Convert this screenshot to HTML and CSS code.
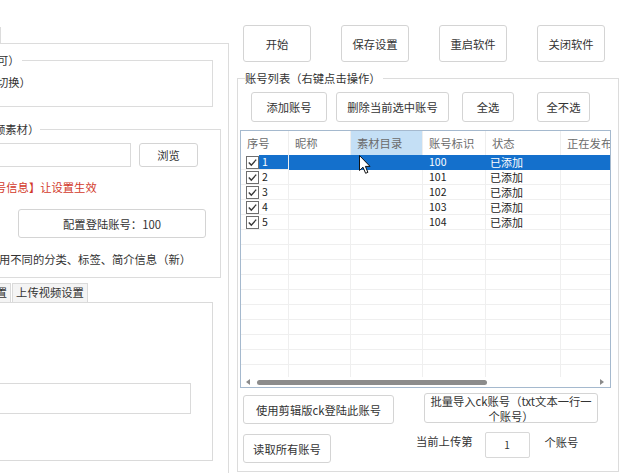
FILE: index.html
```html
<!DOCTYPE html>
<html lang="zh-CN">
<head>
<meta charset="utf-8">
<title>账号设置</title>
<link rel="stylesheet" href="styles.css">
</head>
<body>
<div class="app">
  <div class="left">
    <div class="ltop"><div class="mtab"></div></div>
    <div class="lpage">
      <fieldset class="gb gb1">
        <legend>可）</legend>
        <div class="gb1-text">切换）</div>
      </fieldset>
      <fieldset class="gb gb2">
        <legend>频素材）</legend>
        <div class="pathrow">
          <div class="textbox path"></div>
          <button class="btn browse">浏览</button>
        </div>
        <div class="red">号信息】让设置生效</div>
        <button class="btn cfg">配置登陆账号：100</button>
        <div class="note">用不同的分类、标签、简介信息（新）</div>
      </fieldset>
      <div class="tabs">
        <div class="tab tab-a">置</div>
        <div class="tab tab-b">上传视频设置</div>
      </div>
      <div class="tabpage">
        <div class="textbox wide"></div>
      </div>
    </div>
  </div>

  <div class="right">
    <div class="toprow">
      <button class="btn big">开始</button>
      <button class="btn big">保存设置</button>
      <button class="btn big">重启软件</button>
      <button class="btn big">关闭软件</button>
    </div>
    <fieldset class="gb acct">
      <legend>账号列表（右键点击操作）</legend>
      <div class="actrow">
        <button class="btn act add">添加账号</button>
        <button class="btn act del">删除当前选中账号</button>
        <button class="btn act all">全选</button>
        <button class="btn act none">全不选</button>
      </div>
      <div class="lv">
        <div class="lv-client">
          <div class="lv-row lv-head">
            <div class="hc">序号</div>
            <div class="hc">昵称</div>
            <div class="hc hot">素材目录</div>
            <div class="hc">账号标识</div>
            <div class="hc">状态</div>
            <div class="hc">正在发布</div>
          </div>
          <div class="lv-row lv-item sel">
            <div class="c first"><svg class="cb" width="13" height="13" viewBox="0 0 13 13"><rect x="0.5" y="0.5" width="12" height="12" fill="#fff" stroke="#6f6f6f"/><path d="M2.8 6.4 L5.3 9.1 L10.2 3.6" fill="none" stroke="#3a3a3a" stroke-width="1.4"/></svg><span class="lbl">1</span></div>
            <div class="c"></div><div class="c"></div><div class="c">100</div><div class="c st">已添加</div><div class="c"></div>
          </div>
          <div class="lv-row lv-item">
            <div class="c first"><svg class="cb" width="13" height="13" viewBox="0 0 13 13"><rect x="0.5" y="0.5" width="12" height="12" fill="#fff" stroke="#6f6f6f"/><path d="M2.8 6.4 L5.3 9.1 L10.2 3.6" fill="none" stroke="#3a3a3a" stroke-width="1.4"/></svg><span class="lbl">2</span></div>
            <div class="c"></div><div class="c"></div><div class="c">101</div><div class="c st">已添加</div><div class="c"></div>
          </div>
          <div class="lv-row lv-item">
            <div class="c first"><svg class="cb" width="13" height="13" viewBox="0 0 13 13"><rect x="0.5" y="0.5" width="12" height="12" fill="#fff" stroke="#6f6f6f"/><path d="M2.8 6.4 L5.3 9.1 L10.2 3.6" fill="none" stroke="#3a3a3a" stroke-width="1.4"/></svg><span class="lbl">3</span></div>
            <div class="c"></div><div class="c"></div><div class="c">102</div><div class="c st">已添加</div><div class="c"></div>
          </div>
          <div class="lv-row lv-item">
            <div class="c first"><svg class="cb" width="13" height="13" viewBox="0 0 13 13"><rect x="0.5" y="0.5" width="12" height="12" fill="#fff" stroke="#6f6f6f"/><path d="M2.8 6.4 L5.3 9.1 L10.2 3.6" fill="none" stroke="#3a3a3a" stroke-width="1.4"/></svg><span class="lbl">4</span></div>
            <div class="c"></div><div class="c"></div><div class="c">103</div><div class="c st">已添加</div><div class="c"></div>
          </div>
          <div class="lv-row lv-item">
            <div class="c first"><svg class="cb" width="13" height="13" viewBox="0 0 13 13"><rect x="0.5" y="0.5" width="12" height="12" fill="#fff" stroke="#6f6f6f"/><path d="M2.8 6.4 L5.3 9.1 L10.2 3.6" fill="none" stroke="#3a3a3a" stroke-width="1.4"/></svg><span class="lbl">5</span></div>
            <div class="c"></div><div class="c"></div><div class="c">104</div><div class="c st">已添加</div><div class="c"></div>
          </div>
          <div class="lv-row lv-item"><div class="c"></div><div class="c"></div><div class="c"></div><div class="c"></div><div class="c"></div><div class="c"></div></div>
          <div class="lv-row lv-item"><div class="c"></div><div class="c"></div><div class="c"></div><div class="c"></div><div class="c"></div><div class="c"></div></div>
          <div class="lv-row lv-item"><div class="c"></div><div class="c"></div><div class="c"></div><div class="c"></div><div class="c"></div><div class="c"></div></div>
          <div class="lv-row lv-item"><div class="c"></div><div class="c"></div><div class="c"></div><div class="c"></div><div class="c"></div><div class="c"></div></div>
          <div class="lv-row lv-item"><div class="c"></div><div class="c"></div><div class="c"></div><div class="c"></div><div class="c"></div><div class="c"></div></div>
          <div class="lv-row lv-item"><div class="c"></div><div class="c"></div><div class="c"></div><div class="c"></div><div class="c"></div><div class="c"></div></div>
          <div class="lv-row lv-item"><div class="c"></div><div class="c"></div><div class="c"></div><div class="c"></div><div class="c"></div><div class="c"></div></div>
          <div class="lv-row lv-item"><div class="c"></div><div class="c"></div><div class="c"></div><div class="c"></div><div class="c"></div><div class="c"></div></div>
          <div class="lv-row lv-item"><div class="c"></div><div class="c"></div><div class="c"></div><div class="c"></div><div class="c"></div><div class="c"></div></div>
          <div class="lv-row lv-item"><div class="c"></div><div class="c"></div><div class="c"></div><div class="c"></div><div class="c"></div><div class="c"></div></div>
        </div>
        <div class="hscroll">
          <span class="arr-l"></span>
          <span class="thumb"></span>
          <span class="arr-r"></span>
        </div>
        <svg class="cursor" width="13" height="20" viewBox="0 0 13 20"><path d="M0.5 0.5 L0.5 15.5 L4 12.2 L6.6 18.3 L8.9 17.3 L6.4 11.4 L11 11.4 Z" fill="#fff" stroke="#111" stroke-width="1" stroke-linejoin="round"/></svg>
      </div>
      <div class="brow1">
        <button class="btn clip">使用剪辑版ck登陆此账号</button>
        <button class="btn bulk">批量导入ck账号（txt文本一行一<br>个账号）</button>
      </div>
      <div class="brow2">
        <button class="btn readall">读取所有账号</button>
        <span class="lab cur">当前上传第</span>
        <div class="num">1</div>
        <span class="lab unit">个账号</span>
      </div>
    </fieldset>
  </div>
</div>
</body>
</html>
```
FILE: styles.css
```css
html, body {
  margin: 0;
  padding: 0;
  background: #ffffff;
}
body {
  font-family: "Noto Sans CJK SC", "Noto Sans", sans-serif;
  font-size: 11.3px;
  color: #333;
  width: 620px;
  height: 473px;
  overflow: hidden;
}
.app {
  display: flex;
  height: 473px;
}

/* generic */
.btn {
  font-family: inherit;
  font-size: inherit;
  color: #333;
  background: #fff;
  border: 1px solid #d4d4d4;
  border-radius: 3px;
  padding: 0;
  box-sizing: border-box;
  line-height: 14px;
}
.gb {
  margin: 0;
  padding: 0;
  border: 1px solid #dcdcdc;
  min-width: 0;
}
.gb legend {
  padding: 0 2px 0 0;
  line-height: 16px;
  white-space: nowrap;
}
.textbox {
  border: 1px solid #dadada;
  background: #fff;
  box-sizing: border-box;
}

/* left column (cropped) */
.left {
  width: 229px;
  flex: none;
  overflow: hidden;
}
.ltop {
  height: 43px;
  box-sizing: border-box;
  padding-top: 27px;
}
.mtab {
  margin-left: -60px;
  width: 61px;
  height: 16px;
  box-sizing: border-box;
  border-right: 1px solid #dcdcdc;
}
.lpage {
  margin-left: -60px;
  width: 289px;
  height: 430px;
  box-sizing: border-box;
  border-top: 1px solid #dcdcdc;
  border-right: 1px solid #dcdcdc;
  display: flow-root;
}
.gb1 {
  margin: 8px 15px 0 0;
}
.gb1 legend {
  margin-left: 56px;
}
.gb1-text {
  margin: 6px 0 16px 56px;
  line-height: 16px;
  white-space: nowrap;
}
.gb2 {
  margin: 14px 7px 0 0;
  padding-bottom: 10px;
}
.gb2 legend {
  margin-left: 53px;
  padding-right: 1px;
}
.pathrow {
  display: flex;
  margin-top: 6px;
}
.path {
  width: 190px;
  height: 24px;
}
.browse {
  width: 59px;
  height: 24px;
  margin-left: 8px;
}
.red {
  margin: 12px 0 0 54px;
  line-height: 16px;
  color: #d2392b;
  white-space: nowrap;
}
.cfg {
  display: block;
  margin: 14px 0 0 77px;
  width: 188px;
  height: 29px;
}
.note {
  margin: 13px 0 0 58px;
  line-height: 16px;
  white-space: nowrap;
}
.tabs {
  display: flex;
  margin-top: 5px;
  height: 19px;
}
.tab {
  box-sizing: border-box;
  height: 19px;
  line-height: 17px;
  border: 1px solid #dadada;
  border-bottom: none;
  background: #f4f4f4;
  white-space: nowrap;
}
.tab-a {
  width: 71px;
  text-align: right;
  padding-right: 3px;
}
.tab-b {
  width: 76px;
  margin-left: 1px;
  text-align: center;
}
.tabpage {
  margin-right: 15px;
  height: 159px;
  box-sizing: border-box;
  border: 1px solid #dadada;
  padding-top: 80px;
}
.wide {
  width: 250px;
  height: 31px;
}

/* right column */
.right {
  flex: 1;
  min-width: 0;
}
.toprow {
  display: flex;
  gap: 30px;
  padding: 25px 0 0 14px;
}
.big {
  width: 68px;
  height: 37px;
}
.acct {
  margin: 8px 1px 0 8px;
  padding-bottom: 8px;
}
.acct legend {
  margin-left: 7px;
  padding-right: 2px;
}
.actrow {
  display: flex;
  margin-top: 6px;
}
.act {
  height: 30px;
}
.add { width: 76px; margin-left: 13px; }
.del { width: 113px; margin-left: 9px; }
.all { width: 52px; margin-left: 13px; }
.none { width: 53px; margin-left: 23px; }

/* list view */
.lv {
  position: relative;
  margin: 8px 0 0 2px;
  width: 371px;
  height: 258px;
  box-sizing: border-box;
  border: 1px solid #a5b9ce;
  display: flex;
  flex-direction: column;
}
.lv-client {
  height: 246px;
  overflow: hidden;
  flex: none;
}
.lv-row {
  display: grid;
  grid-template-columns: 48px 62px 72px 63px 75px 100px;
  width: 420px;
}
.lv-head {
  height: 24px;
}
.hc {
  line-height: 24px;
  padding-left: 6px;
  color: #6b6b6b;
  border-right: 1px solid #eeeeee;
  white-space: nowrap;
  overflow: hidden;
}
.hc.hot {
  background: #c4dff5;
}
.lv-item {
  height: 15px;
}
.c {
  box-sizing: border-box;
  height: 15px;
  border-right: 1px solid #efefef;
  border-bottom: 1px solid #efefef;
  font-size: 10.5px;
  line-height: 14px;
  padding-left: 6px;
  color: #222;
  white-space: nowrap;
  overflow: hidden;
}
.c.st {
  padding-left: 4px;
  font-size: 11px;
}
.c.first {
  display: flex;
  align-items: center;
  padding-left: 5px;
}
.cb {
  flex: none;
  display: block;
}
.lbl {
  flex: 1;
  height: 14px;
  padding-left: 3px;
  line-height: 14px;
}
.sel .c {
  background: #1470cc;
  color: #fff;
  border-color: #1470cc;
}
.sel .c.first {
  background: #fff;
  border-right-color: #efefef;
  border-bottom-color: #efefef;
}
.sel .lbl {
  background: #1470cc;
  color: #fff;
}
.hscroll {
  height: 10px;
  display: flex;
  align-items: center;
}
.arr-l {
  margin-left: 5px;
  width: 0;
  height: 0;
  border-top: 3px solid transparent;
  border-bottom: 3px solid transparent;
  border-right: 4px solid #8a8a8a;
}
.thumb {
  margin-left: 7px;
  width: 230px;
  height: 5px;
  border-radius: 3px;
  background: #8c8c8c;
}
.arr-r {
  margin-left: auto;
  margin-right: 6px;
  width: 0;
  height: 0;
  border-top: 3px solid transparent;
  border-bottom: 3px solid transparent;
  border-left: 4px solid #8a8a8a;
}
.cursor {
  position: absolute;
  left: 118px;
  top: 24px;
}

/* bottom rows */
.brow1 {
  display: flex;
  align-items: flex-start;
  margin-top: 5px;
}
.clip {
  width: 151px;
  height: 29px;
  margin: 2px 0 0 5px;
}
.bulk {
  width: 174px;
  height: 30px;
  margin-left: 30px;
  line-height: 15px;
}
.brow2 {
  display: flex;
  align-items: flex-start;
  margin-top: 8px;
}
.readall {
  width: 88px;
  height: 29px;
  margin: 2px 0 0 5px;
}
.lab {
  line-height: 16px;
  white-space: nowrap;
}
.cur {
  margin: 1px 0 0 85px;
}
.num {
  margin-left: 12px;
  width: 45px;
  height: 26px;
  box-sizing: border-box;
  border: 1px solid #d8d8d8;
  border-radius: 2px;
  text-align: center;
  line-height: 24px;
  font-size: 10px;
}
.unit {
  margin: 2px 0 0 15px;
}
```
